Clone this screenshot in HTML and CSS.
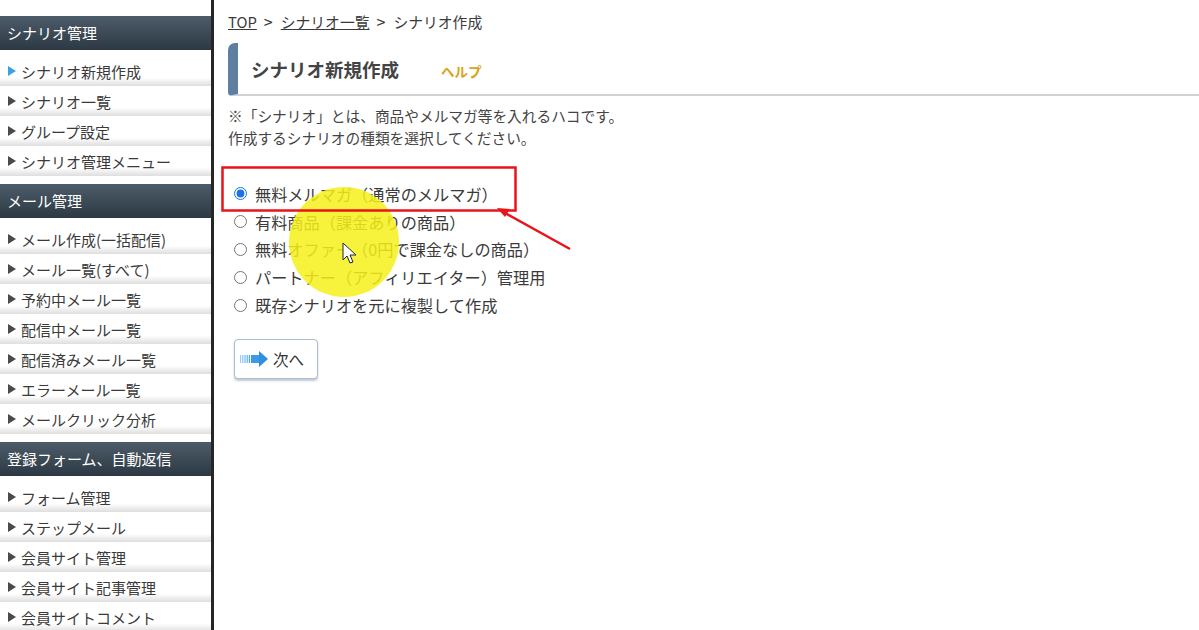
FILE: index.html
```html
<!DOCTYPE html>
<html lang="ja">
<head>
    <meta charset="UTF-8">
    <meta name="viewport" content="width=device-width, initial-scale=1.0">
    <title>シナリオ作成</title>
    <link rel="stylesheet" href="styles.css">
</head>
<body>
    <div class="page">
        <aside class="sidebar">
            <div class="menu-head">シナリオ管理</div>
            <ul class="menu">
                <li class="current">シナリオ新規作成</li>
                <li>シナリオ一覧</li>
                <li>グループ設定</li>
                <li>シナリオ管理メニュー</li>
            </ul>

            <div class="menu-head">メール管理</div>
            <ul class="menu">
                <li>メール作成(一括配信)</li>
                <li>メール一覧(すべて)</li>
                <li>予約中メール一覧</li>
                <li>配信中メール一覧</li>
                <li>配信済みメール一覧</li>
                <li>エラーメール一覧</li>
                <li>メールクリック分析</li>
            </ul>

            <div class="menu-head">登録フォーム、自動返信</div>
            <ul class="menu">
                <li>フォーム管理</li>
                <li>ステップメール</li>
                <li>会員サイト管理</li>
                <li>会員サイト記事管理</li>
                <li>会員サイトコメント</li>
            </ul>
        </aside>

        <main class="main">
            <div class="breadcrumb">
                <a href="#">TOP</a><span class="sep">&gt;</span><a href="#">シナリオ一覧</a><span class="sep">&gt;</span>シナリオ作成
            </div>

            <div class="title-box">
                <h1>シナリオ新規作成</h1>
                <a class="help" href="#">ヘルプ</a>
            </div>

            <p class="note">
                ※「シナリオ」とは、商品やメルマガ等を入れるハコです。<br>
                作成するシナリオの種類を選択してください。
            </p>

            <form class="choices">
                <label><input type="radio" name="kind" checked>無料メルマガ（通常のメルマガ）</label>
                <label><input type="radio" name="kind">有料商品（課金ありの商品）</label>
                <label><input type="radio" name="kind">無料オファー（0円で課金なしの商品）</label>
                <label><input type="radio" name="kind">パートナー（アフィリエイター）管理用</label>
                <label><input type="radio" name="kind">既存シナリオを元に複製して作成</label>

                <button type="button" class="next-btn">
                    <svg width="30" height="16" viewBox="0 0 30 16">
                        <rect x="0" y="4" width="1.2" height="8" fill="#9ad0f6"/>
                        <rect x="2.2" y="4" width="1.2" height="8" fill="#88c7f4"/>
                        <rect x="4.4" y="4" width="1.2" height="8" fill="#76bdf2"/>
                        <rect x="6.6" y="4" width="1.2" height="8" fill="#62b2ef"/>
                        <rect x="8.8" y="4" width="1.2" height="8" fill="#50a8ec"/>
                        <rect x="11" y="4" width="9" height="8" fill="#3c9be8"/>
                        <path d="M19 0 L28 8 L19 16 Z" fill="#2f8fe3"/>
                    </svg>
                    次へ
                </button>
            </form>
        </main>
    </div>

    <!-- 動画の注釈（赤枠・矢印・ハイライト・カーソル） -->
    <svg class="annotations" width="1199" height="630" viewBox="0 0 1199 630">
        <circle cx="344" cy="242" r="55" fill="#f6f01a" opacity="0.85"/>
        <rect x="222.5" y="167.5" width="293" height="43" fill="none" stroke="#e8141a" stroke-width="2.5"/>
        <line x1="570" y1="249" x2="505" y2="213" stroke="#e8141a" stroke-width="2.5"/>
        <path d="M497 208 L510 209 L505 217 Z" fill="#e8141a"/>
        <path d="M343 243 L343 260 L347 256 L350 263 L353 262 L350 255 L356 255 Z" fill="#fff" stroke="#222" stroke-width="1"/>
    </svg>
</body>
</html>
```

FILE: styles.css
```css
:root {
    --text: #3a3a3a;
    --head-top: #4d5c69;
    --head-bottom: #2c3944;
    --accent: #5f7fa0;
}

body {
    margin: 0;
    font-family: "Noto Sans CJK JP", "Noto Sans", sans-serif;
    color: var(--text);
    background: white;
    overflow: hidden;
}

.page {
    display: flex;
    height: 630px;
}

.sidebar {
    width: 211px;
    flex-shrink: 0;
    border-right: 3px solid #262626;
    padding-top: 16px;
    overflow: hidden;
}

.menu-head {
    height: 34px;
    line-height: 34px;
    padding-left: 7px;
    color: white;
    font-size: 15px;
    background: linear-gradient(var(--head-top), var(--head-bottom));
    margin-bottom: 6px;
    white-space: nowrap;
}

.menu {
    list-style: none;
    margin: 0 0 8px;
    padding: 0;
}

.menu li {
    height: 30px;
    display: flex;
    align-items: center;
    padding-left: 8px;
    font-size: 15px;
    white-space: nowrap;
    background: linear-gradient(#fff 0%, #fff 72%, #dedede 100%);
}

.menu li::before {
    content: '';
    border-left: 8px solid #4a4a4a;
    border-top: 5px solid transparent;
    border-bottom: 5px solid transparent;
    margin-right: 5px;
}

.menu li.current::before {
    border-left-color: #3ba2e2;
}

.main {
    flex: 1;
    padding-left: 14px;
}

.breadcrumb {
    font-size: 14.8px;
    height: 20px;
    line-height: 20px;
    margin-top: 11px;
    white-space: nowrap;
}

.breadcrumb a {
    color: var(--text);
}

.breadcrumb .sep {
    margin: 0 8px 0 7px;
    font-size: 16px;
}

.title-box {
    display: flex;
    align-items: center;
    height: 51px;
    margin-top: 12px;
    padding-left: 13px;
    border-left: 10px solid var(--accent);
    border-bottom: 2px solid #d2d2d2;
    border-radius: 7px 0 0 4px;
}

.title-box h1 {
    margin: 0;
    font-size: 18.5px;
    font-weight: bold;
    color: #444;
}

.help {
    margin-left: 42px;
    margin-top: 4px;
    font-size: 13.5px;
    font-weight: bold;
    color: #d6a416;
    text-decoration: none;
}

.note {
    margin: 9px 0 0;
    font-size: 14.7px;
    line-height: 22px;
    color: #444;
}

.choices {
    display: flex;
    flex-direction: column;
    align-items: flex-start;
    margin-top: 31px;
}

.choices label {
    display: flex;
    align-items: center;
    height: 27.8px;
    font-size: 16.2px;
    white-space: nowrap;
}

.choices input {
    width: 13px;
    height: 13px;
    margin: 0 8px 0 6px;
    accent-color: #1a73e8;
}

.next-btn {
    display: flex;
    align-items: center;
    gap: 3px;
    width: 84px;
    height: 40px;
    margin: 20px 0 0 6px;
    padding: 0 0 0 5px;
    background: white;
    border: 1px solid #a9bdd3;
    border-radius: 4px;
    box-shadow: 0 2px 2px rgba(80, 100, 130, 0.35);
    font-family: inherit;
    font-size: 15.5px;
    color: #333;
}

.annotations {
    position: absolute;
    top: 0;
    left: 0;
    pointer-events: none;
}
```
